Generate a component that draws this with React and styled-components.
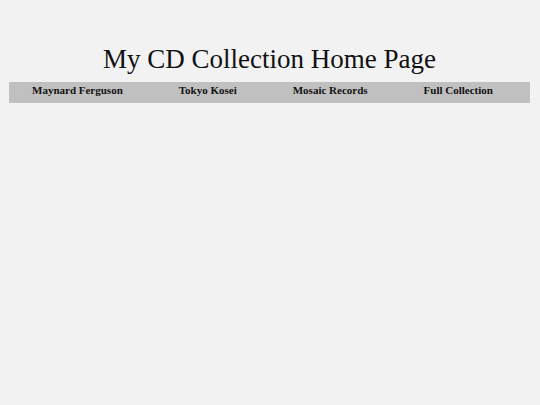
import styled, { createGlobalStyle } from "styled-components";

const GlobalStyle = createGlobalStyle`
  html, body {
    margin: 0;
    padding: 0;
    background: #f2f2f2;
  }
  body {
    font-family: "Liberation Serif", "Times New Roman", serif;
    color: #111;
  }
`;

const Page = styled.div`
  padding: 44px 10px 0 9px;
`;

const Title = styled.h1`
  margin: 0 0 7px;
  font-size: 27px;
  font-weight: normal;
  line-height: 31px;
  text-align: center;
  white-space: nowrap;
`;

const NavBar = styled.ul`
  display: flex;
  gap: 56px;
  margin: 0;
  padding: 3px 0 7px 23px;
  list-style: none;
  background: #c0c0c0;
`;

const NavItem = styled.li`
  font-size: 11px;
  font-weight: bold;
  line-height: 11px;
  white-space: nowrap;
`;

const links = ["Maynard Ferguson", "Tokyo Kosei", "Mosaic Records", "Full Collection"];

const App = () => {
  return (
    <Page>
      <GlobalStyle />
      <Title>My CD Collection Home Page</Title>
      <NavBar>
        {links.map((l) => (
          <NavItem key={l}>{l}</NavItem>
        ))}
      </NavBar>
    </Page>
  );
};

export default App;
